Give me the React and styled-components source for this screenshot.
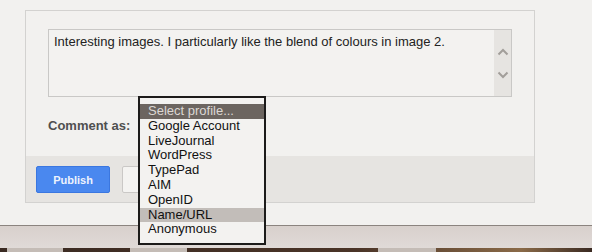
import React from 'react';
import styled, { createGlobalStyle } from 'styled-components';

const GlobalStyle = createGlobalStyle`
  html, body {
    margin: 0;
    padding: 0;
  }
  body {
    background: #f2f1ef;
    font-family: "Liberation Sans", Arial, sans-serif;
  }
`;

const profiles = [
  'Select profile...',
  'Google Account',
  'LiveJournal',
  'WordPress',
  'TypePad',
  'AIM',
  'OpenID',
  'Name/URL',
  'Anonymous',
];

const ChevronUp = () => (
  <svg width="12" height="8" viewBox="0 0 12 8">
    <path d="M1.5 6.5 L6 2 L10.5 6.5" fill="none" stroke="#a29e9a" strokeWidth="2" />
  </svg>
);

const ChevronDown = () => (
  <svg width="12" height="8" viewBox="0 0 12 8">
    <path d="M1.5 1.5 L6 6 L10.5 1.5" fill="none" stroke="#a29e9a" strokeWidth="2" />
  </svg>
);

const App = function () {
  return (
    <>
      <GlobalStyle />
      <Screen>
        <Content>
          <Panel>
            <Body>
              <CommentBox>
                <CommentText>
                  Interesting images. I particularly like the blend of colours in image 2.
                </CommentText>
                <ScrollTrack>
                  <ChevronUp />
                  <ChevronDown />
                </ScrollTrack>
              </CommentBox>
              <IdentityRow>
                <Label>Comment as:</Label>
                <SelectWrap>
                  <ProfileList>
                    {profiles.map((name, i) => (
                      <ProfileOption
                        key={name}
                        $variant={i === 0 ? 'active' : name === 'Name/URL' ? 'hover' : 'plain'}
                      >
                        {name}
                      </ProfileOption>
                    ))}
                  </ProfileList>
                </SelectWrap>
              </IdentityRow>
            </Body>
            <Footer>
              <PublishButton>Publish</PublishButton>
              <PreviewButton />
            </Footer>
          </Panel>
        </Content>
        <Divider />
        <Band />
        <Taskbar>
          <TaskTab $left={7} $width={56} />
          <TaskTab $left={67} $width={57} />
          <TaskTab $left={191} $width={58} />
        </Taskbar>
      </Screen>
    </>
  );
};

export default App;

const Screen = styled.div`
  width: 592px;
  height: 252px;
  display: flex;
  flex-direction: column;
  overflow: hidden;
  background: #f2f1ef;
`;

const Content = styled.div`
  height: 225px;
  box-sizing: border-box;
  padding: 10px 0 0 25px;
`;

const Panel = styled.div`
  width: 510px;
  height: 193px;
  box-sizing: border-box;
  border: 1px solid #d3d2d0;
  background: #f2f1ef;
  display: flex;
  flex-direction: column;
`;

const Body = styled.div`
  flex: 1;
  padding: 18px 22px 0 22px;
`;

const CommentBox = styled.div`
  width: 464px;
  height: 68px;
  box-sizing: border-box;
  border: 1px solid #c9c8c6;
  background: #f3f2f0;
  display: flex;
`;

const CommentText = styled.div`
  flex: 1;
  padding: 4px 5px;
  font-size: 13px;
  line-height: 16px;
  color: #222222;
`;

const ScrollTrack = styled.div`
  width: 17px;
  background: #e6e4e1;
  display: flex;
  flex-direction: column;
  align-items: center;
  padding-top: 18px;
  gap: 15px;
  box-sizing: border-box;
`;

const IdentityRow = styled.div`
  margin-top: 18px;
  height: 20px;
  display: flex;
  align-items: center;
`;

const Label = styled.span`
  width: 90px;
  font-size: 13px;
  font-weight: bold;
  color: #4f4f4f;
`;

const SelectWrap = styled.div`
  position: relative;
  width: 128px;
  height: 20px;
`;

const ProfileList = styled.div`
  position: absolute;
  top: -19px;
  left: 0;
  width: 128px;
  height: 149px;
  box-sizing: border-box;
  border: 2px solid #1c1b1a;
  background: #f3f2f0;
  padding-top: 6px;
  z-index: 5;
`;

const ProfileOption = styled.div`
  height: 14.8px;
  line-height: 14.8px;
  padding-left: 8px;
  font-size: 13px;
  white-space: nowrap;
  color: ${(p) => (p.$variant === 'active' ? '#dcd8d4' : '#111111')};
  background: ${(p) =>
    p.$variant === 'active' ? '#6c6560' : p.$variant === 'hover' ? '#c2bdb9' : 'transparent'};
`;

const Footer = styled.div`
  height: 46px;
  background: #e6e4e1;
  display: flex;
  align-items: flex-start;
  gap: 12px;
  padding: 10px 0 0 10px;
  box-sizing: border-box;
`;

const PublishButton = styled.button`
  width: 74px;
  height: 27px;
  border: 1px solid #3b77e0;
  border-radius: 2px;
  background: #4a88ef;
  color: #eef3fd;
  font-family: "Liberation Sans", Arial, sans-serif;
  font-size: 11px;
  font-weight: bold;
  padding: 0;
`;

const PreviewButton = styled.div`
  width: 74px;
  height: 27px;
  box-sizing: border-box;
  border: 1px solid #cac8c6;
  border-radius: 2px;
  background: #f4f3f1;
`;

const Divider = styled.div`
  height: 1px;
  background: #8b847f;
`;

const Band = styled.div`
  height: 22px;
  background: linear-gradient(#d8d0cc, #e0dad7);
`;

const Taskbar = styled.div`
  flex: 1;
  display: flex;
  background: linear-gradient(90deg, #3a2a22 0%, #4a3427 60%, #8a6a48 88%, #3a2a22 100%);
`;

const TaskTab = styled.div`
  margin-left: ${(p) => p.$left}px;
  width: ${(p) => p.$width}px;
  background: #c4bcb6;
`;
